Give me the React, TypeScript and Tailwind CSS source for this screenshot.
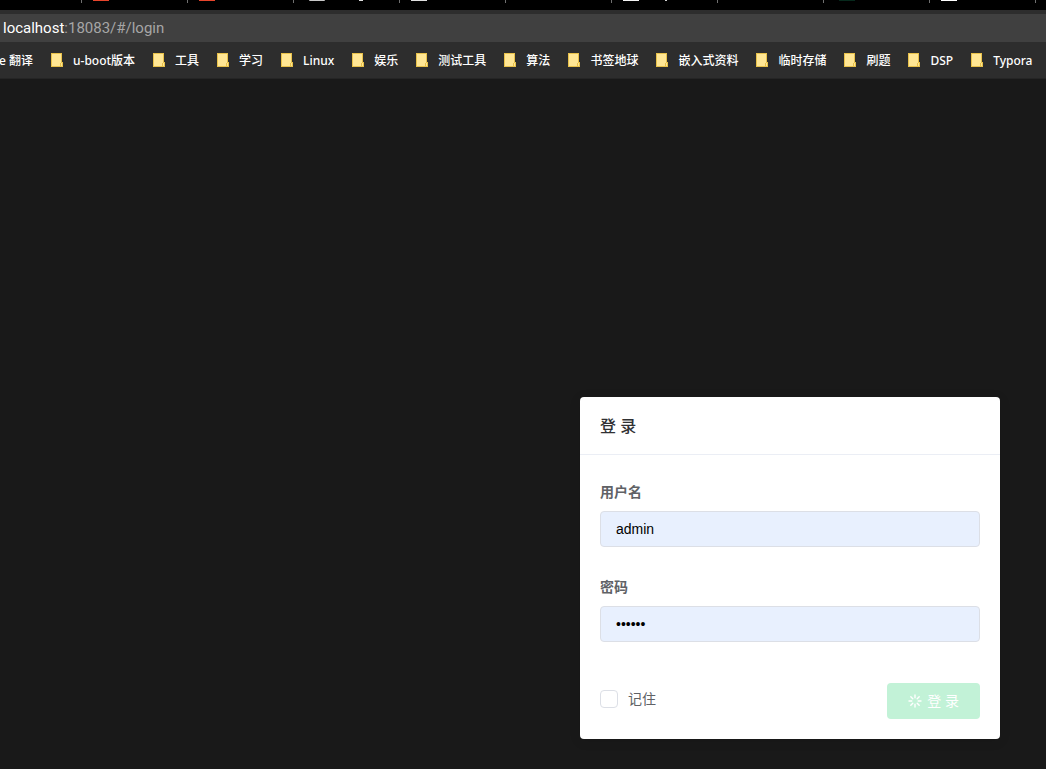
import { FC, useState } from "react";

interface Tab {
  mark: string; // colour of the favicon edge
  hint?: string; // title stroke that reaches into the strip
}

const tabs: Tab[] = [
  { mark: "bg-[#e8452c]" },
  { mark: "bg-[#e8452c]" },
  { mark: "mx-1 w-2 rounded-b-full bg-[#c8c8c8]", hint: "ml-[30px] w-1 bg-[#e0e0e0]" },
  { mark: "bg-[#e0e0e0]" },
  { mark: "bg-transparent" },
  { mark: "bg-[#f4f4f4]", hint: "ml-[26px] w-0.5 bg-[#d0d0d0]" },
  { mark: "bg-transparent" },
  { mark: "mx-1 w-2 bg-[#06291c]" },
  { mark: "bg-white" },
  { mark: "bg-transparent" },
];

const bookmarks = [
  "u-boot版本",
  "工具",
  "学习",
  "Linux",
  "娱乐",
  "测试工具",
  "算法",
  "书签地球",
  "嵌入式资料",
  "临时存储",
  "刷题",
  "DSP",
  "Typora",
];

const FolderIcon: FC = () => (
  <svg width="12" height="14" viewBox="0 0 12 14" className="mb-0.5 shrink-0" aria-hidden="true">
    <path d="M0 0h11v9h1v5H0z" fill="#e8c14a" />
    <path d="M1 1h9v9H9v3H1z" fill="#ffe694" />
    <path d="M10 10h1v3h-1z" fill="#ffe694" />
  </svg>
);

const LoadingIcon: FC = () => (
  <svg
    width="14"
    height="14"
    viewBox="0 0 14 14"
    fill="none"
    stroke="currentColor"
    strokeWidth="1.4"
    strokeLinecap="round"
    aria-hidden="true"
  >
    <path d="M7 1v2.8M7 10.2V13M1 7h2.8M10.2 7H13" />
    <path d="M2.8 2.8l2 2M9.2 9.2l2 2M2.8 11.2l2-2M9.2 4.8l2-2" />
  </svg>
);

const BrowserBar: FC = () => (
  <header className="bg-[#2d2d2d] text-white">
    {/* TAB STRIP */}
    <div className="flex h-2.5 overflow-hidden bg-black pl-[81px]">
      {tabs.map((tab, index) => (
        <div key={index} className="flex w-[106px] shrink-0">
          <span className="mr-[11px] h-[3px] w-px bg-[#707070]"></span>
          <span className={`h-px w-4 ${tab.mark}`}></span>
          {tab.hint && <span className={`h-px ${tab.hint}`}></span>}
        </div>
      ))}
    </div>

    {/* ADDRESS */}
    <div className="mt-1 flex h-7 items-center bg-[#404040] pl-[3px] font-[Roboto,sans-serif] text-[15px]">
      <span>localhost</span>
      <span className="text-[#a6a6a6]">:18083/#/login</span>
    </div>

    {/* BOOKMARKS */}
    <nav className="flex h-[37px] items-center gap-[18px] overflow-hidden border-b border-[#252525] pt-0.5 text-xs font-medium whitespace-nowrap">
      <a href="#" className="flex w-[33px] shrink-0 justify-end">
        e 翻译
      </a>
      {bookmarks.map((name) => (
        <a key={name} href="#" className="flex items-center gap-2.5">
          <FolderIcon />
          {name}
        </a>
      ))}
    </nav>
  </header>
);

const LoginCard: FC = () => {
  const [username, setUsername] = useState("admin");
  const [password, setPassword] = useState("public");
  const [remember, setRemember] = useState(false);

  const labelStyle = "block pb-0.5 text-sm leading-[34px] font-bold text-[#606266]";
  const inputStyle =
    "block h-9 w-full rounded-sm border border-[#dcdfe6] bg-[#e8f0fe] px-[15px] font-['Liberation_Sans',Arial,sans-serif] text-sm text-black outline-none";

  return (
    <section className="w-full max-w-[420px] rounded-sm bg-white shadow-[0_2px_12px_rgba(0,0,0,0.1)]">
      <h1 className="border-b border-[#ebeef5] px-5 pt-[18px] pb-4 text-base leading-[23px] font-medium text-[#303133]">
        登 录
      </h1>
      <form className="p-5" onSubmit={(e) => e.preventDefault()}>
        <div className="mb-[23px]">
          <label htmlFor="username" className={labelStyle}>
            用户名
          </label>
          <input
            id="username"
            type="text"
            className={inputStyle}
            value={username}
            onChange={(e) => setUsername(e.target.value)}
          />
        </div>
        <div className="mb-[41px]">
          <label htmlFor="password" className={labelStyle}>
            密码
          </label>
          <input
            id="password"
            type="password"
            className={inputStyle}
            value={password}
            onChange={(e) => setPassword(e.target.value)}
          />
        </div>

        <div className="flex items-center justify-between">
          <label className="flex items-center gap-2.5 pb-1 text-sm text-[#606266]">
            <input
              type="checkbox"
              className="size-[18px] appearance-none rounded-sm border border-[#dcdfe6] bg-white checked:bg-[#34c388]"
              checked={remember}
              onChange={(e) => setRemember(e.target.checked)}
            />
            记住
          </label>
          <button
            type="submit"
            disabled
            className="flex h-9 items-center gap-[5px] rounded-sm bg-[#c2f2d7] px-[21px] text-sm text-white"
          >
            <LoadingIcon />
            登 录
          </button>
        </div>
      </form>
    </section>
  );
};

export default function App() {
  return (
    <div className="flex min-h-screen flex-col bg-[#191919] font-['Noto_Sans','Noto_Sans_CJK_SC',sans-serif]">
      <BrowserBar />
      <main className="flex flex-1 items-end justify-end pr-[46px] pb-[30px]">
        <LoginCard />
      </main>
    </div>
  );
}
